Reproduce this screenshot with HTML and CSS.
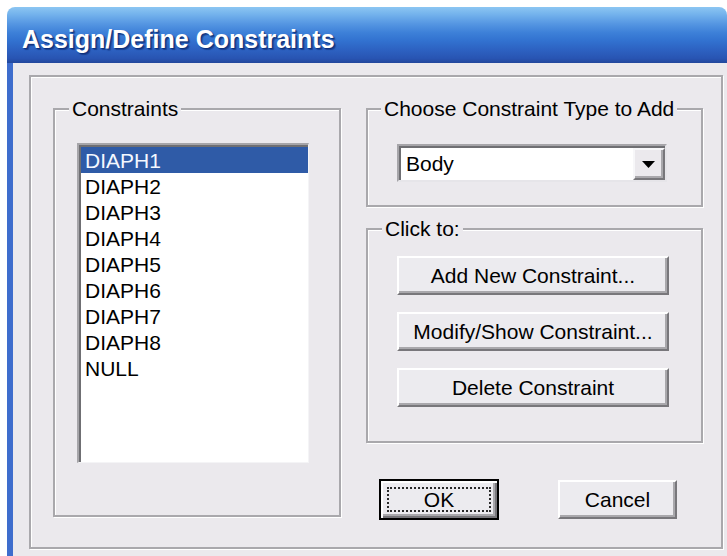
FILE: index.html
```html
<!DOCTYPE html>
<html lang="en">
<head>
<meta charset="utf-8">
<title>Assign/Define Constraints</title>
<link rel="stylesheet" href="styles.css">
</head>
<body>
<div class="window">
  <div class="titlebar">Assign/Define Constraints</div>
  <div class="client">
    <div class="frame">
      <fieldset class="group group-list">
        <legend>Constraints</legend>
        <div class="list-body">
          <div class="listbox">
            <div class="listbox-inner">
              <div class="item selected">DIAPH1</div>
              <div class="item">DIAPH2</div>
              <div class="item">DIAPH3</div>
              <div class="item">DIAPH4</div>
              <div class="item">DIAPH5</div>
              <div class="item">DIAPH6</div>
              <div class="item">DIAPH7</div>
              <div class="item">DIAPH8</div>
              <div class="item">NULL</div>
            </div>
          </div>
        </div>
      </fieldset>

      <div class="side">
        <fieldset class="group group-type">
          <legend>Choose Constraint Type to Add</legend>
          <div class="type-body">
            <div class="combo">
              <div class="combo-inner">
                <span class="combo-value">Body</span>
                <span class="combo-drop">
                  <svg width="13" height="7" viewBox="0 0 13 7"><polygon points="0,0 13,0 6.5,7" fill="#000"/></svg>
                </span>
              </div>
            </div>
          </div>
        </fieldset>

        <fieldset class="group group-actions">
          <legend>Click to:</legend>
          <div class="actions-body">
            <button class="btn btn-wide" type="button">Add New Constraint...</button>
            <button class="btn btn-wide" type="button">Modify/Show Constraint...</button>
            <button class="btn btn-wide" type="button">Delete Constraint</button>
          </div>
        </fieldset>

        <div class="dialog-buttons">
          <button class="btn btn-ok" type="button">OK</button>
          <button class="btn btn-cancel" type="button">Cancel</button>
        </div>
      </div>
    </div>
  </div>
</div>
</body>
</html>
```

FILE: styles.css
```css
html, body {
  margin: 0;
  padding: 0;
  background: #ffffff;
  overflow: hidden;
}

body {
  width: 727px;
  height: 556px;
  font-family: "Liberation Sans", Arial, sans-serif;
  font-size: 21px;
  color: #000;
}

/* dialog window */
.window {
  margin: 7px 0 0 7px;
  width: 720px;
  overflow: hidden;
}

.titlebar {
  height: 56px;
  box-sizing: border-box;
  padding: 8px 0 0 15px;
  line-height: 48px;
  border-radius: 8px 8px 0 0;
  background: linear-gradient(to bottom,
    #8cc6f2 0%,
    #72b1ec 14%,
    #5596e2 30%,
    #3d80d8 46%,
    #3272d0 60%,
    #2d62c2 76%,
    #2854b2 92%,
    #22479c 100%);
  color: #fff;
  font-family: "Liberation Sans", Arial, sans-serif;
  font-weight: bold;
  font-size: 25px;
  white-space: nowrap;
  text-shadow: 1px 1px 1px #0d2f7a, 2px 2px 1px rgba(12, 40, 110, 0.55);
}

.client {
  box-sizing: border-box;
  background: #ebe9ed;
  border-left: 6px solid #3e6dcd;
  padding: 12px 0 0 16px;
  height: 493px;
}

/* etched outer frame */
.frame {
  box-sizing: border-box;
  width: 694px;
  height: 474px;
  border: 2px solid #a9a8ac;
  box-shadow: 1px 1px 0 #ffffff, inset 1px 1px 0 #ffffff;
  padding: 20px 0 0 22px;
  display: grid;
  grid-template-columns: 288px 337px;
  column-gap: 25px;
  align-items: start;
}

/* group boxes */
.group {
  box-sizing: border-box;
  margin: 0;
  padding: 0;
  min-width: 0;
  border: 2px solid #a9a8ac;
  box-shadow: 1px 1px 0 #ffffff, inset 1px 1px 0 #ffffff;
}

.group legend {
  padding: 0 3px;
  line-height: 24px;
  background: #ebe9ed;
  white-space: nowrap;
}

.group-list {
  height: 420px;
}
.group-list legend {
  margin-left: 14px;
}

.list-body {
  padding: 22px 0 0 22px;
}

/* sunken list box */
.listbox {
  box-sizing: border-box;
  width: 232px;
  height: 320px;
  background: #fff;
  border-style: solid;
  border-width: 2px 1px 1px 2px;
  border-color: #a6a5a9 #f4f4f6 #f4f4f6 #a6a5a9;
}

.listbox-inner {
  height: 100%;
  box-sizing: border-box;
  border-style: solid;
  border-width: 2px 0 0 2px;
  border-color: #6f6f73;
}

.item {
  height: 26px;
  line-height: 26px;
  padding: 1px 0 0 4px;
  box-sizing: border-box;
  white-space: nowrap;
}

.item.selected {
  background: #2f5ba7;
  color: #f4f8ff;
}

.side {
  display: flex;
  flex-direction: column;
}

.group-type {
  height: 110px;
}
.group-type legend {
  margin-left: 13px;
}

.type-body {
  padding: 23px 0 0 29px;
}

/* drop-down combo */
.combo {
  box-sizing: border-box;
  width: 270px;
  height: 38px;
  background: #fff;
  border-style: solid;
  border-width: 2px;
  border-color: #a6a5a9 #e6e5e9 #e6e5e9 #a6a5a9;
}

.combo-inner {
  box-sizing: border-box;
  height: 100%;
  display: flex;
  align-items: stretch;
  border-style: solid;
  border-width: 2px 0 0 2px;
  border-color: #6f6f73;
}

.combo-value {
  flex: 1;
  padding-left: 5px;
  line-height: 32px;
}

.combo-drop {
  box-sizing: border-box;
  width: 32px;
  display: flex;
  align-items: center;
  justify-content: center;
  background: #ebe9ed;
  border-style: solid;
  border-width: 2px;
  border-color: #f7f7f9 #78777b #78777b #f7f7f9;
  box-shadow: inset -2px -2px 0 #a9a8ac;
  padding: 1px 1px 0 0;
}

.group-actions {
  margin-top: 10px;
  height: 226px;
}
.group-actions legend {
  margin-left: 14px;
}

.actions-body {
  padding: 15px 0 0 29px;
  display: flex;
  flex-direction: column;
  gap: 17px;
}

/* raised push buttons */
.btn {
  box-sizing: border-box;
  margin: 0;
  padding: 0;
  font-family: "Liberation Sans", Arial, sans-serif;
  font-size: 21px;
  color: #000;
  background: #ecebef;
  border-style: solid;
  border-width: 2px;
  border-color: #ffffff #78777b #78777b #ffffff;
  box-shadow: inset -2px -2px 0 #a9a8ac;
  display: flex;
  align-items: center;
  justify-content: center;
  white-space: nowrap;
}

.btn-wide {
  width: 272px;
  height: 39px;
}

.dialog-buttons {
  margin-top: 36px;
  padding-left: 13px;
  display: flex;
  align-items: center;
  gap: 59px;
}

.btn-ok {
  width: 120px;
  height: 41px;
  border-color: #000;
  box-shadow: inset 2px 2px 0 #ffffff, inset -2px -2px 0 #78777b, inset -4px -4px 0 #a9a8ac;
  outline: 2px dotted #2a2a2a;
  outline-offset: -10px;
}

.btn-cancel {
  width: 119px;
  height: 39px;
}
```
